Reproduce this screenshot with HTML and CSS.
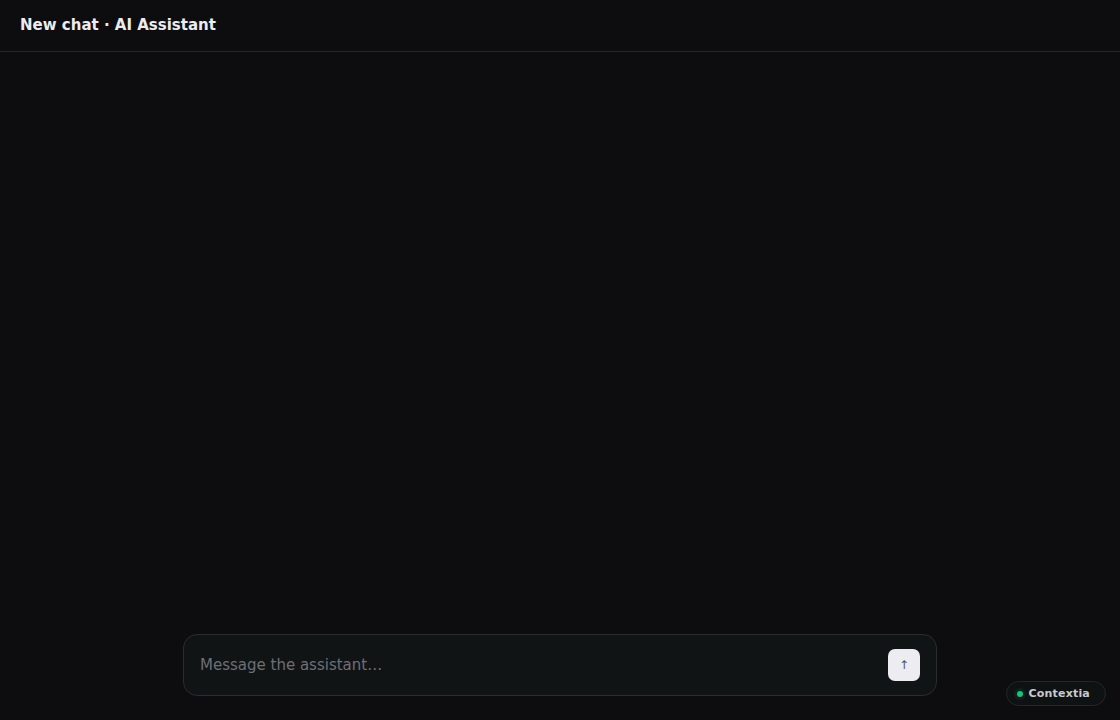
FILE: index.html
```html
<!DOCTYPE html>
<html lang="en">
<head>
<meta charset="utf-8">
<title>New chat · AI Assistant</title>
<link rel="stylesheet" href="styles.css">
</head>
<body>
<div class="app">
  <header class="topbar">
    <h1 class="title">New chat · AI Assistant</h1>
  </header>
  <main class="thread"></main>
  <div class="composer-wrap">
    <form class="composer">
      <input class="composer-input" type="text" placeholder="Message the assistant…">
      <button class="send" type="button">↑</button>
    </form>
  </div>
</div>
<div class="badge"><span class="dot"></span>Contextia</div>
</body>
</html>
```
FILE: styles.css
```css
* { box-sizing: border-box; }
html, body { margin: 0; height: 100%; }
body {
  background: #0d0d0f;
  color: #ececf1;
  font-family: "DejaVu Sans", sans-serif;
}
.app {
  display: flex;
  flex-direction: column;
  height: 100vh;
}
.topbar {
  height: 52px;
  display: flex;
  align-items: center;
  padding: 0 20px 2px;
  border-bottom: 1px solid #26272b;
  flex: none;
}
.title {
  margin: 0;
  font-size: 15px;
  font-weight: bold;
  color: #ececf1;
}
.thread { flex: 1; }
.composer-wrap {
  display: flex;
  justify-content: center;
  padding: 0 0 24px;
}
.composer {
  width: 754px;
  height: 62px;
  display: flex;
  align-items: center;
  gap: 12px;
  padding: 0 16px;
  background: #111415;
  border: 1px solid #2a2c30;
  border-radius: 14px;
  margin: 0;
}
.composer-input {
  flex: 1;
  background: transparent;
  border: 0;
  outline: none;
  font-family: "DejaVu Sans", sans-serif;
  font-size: 15px;
  color: #ececf1;
  padding: 0;
  margin-top: -1px;
}
.composer-input::placeholder { color: #6e6f75; }
.send {
  width: 32px;
  height: 32px;
  flex: none;
  border: 0;
  border-radius: 7px;
  background: #ececf1;
  color: #55565c;
  font-family: "DejaVu Sans", sans-serif;
  font-size: 12px;
  padding: 0;
  display: flex;
  align-items: center;
  justify-content: center;
}
.badge {
  position: fixed;
  right: 14px;
  bottom: 14px;
  height: 25px;
  padding: 0 15px 0 10px;
  display: flex;
  align-items: center;
  gap: 5px;
  background: #0f1213;
  border: 1px solid #24272a;
  border-radius: 13px;
  font-size: 11px;
  font-weight: bold;
  color: #c9cace;
  letter-spacing: 0.2px;
}
.dot {
  width: 6px;
  height: 6px;
  border-radius: 50%;
  background: #19c37d;
  box-shadow: 0 0 0 3px rgba(25, 195, 125, 0.08);
}
```
